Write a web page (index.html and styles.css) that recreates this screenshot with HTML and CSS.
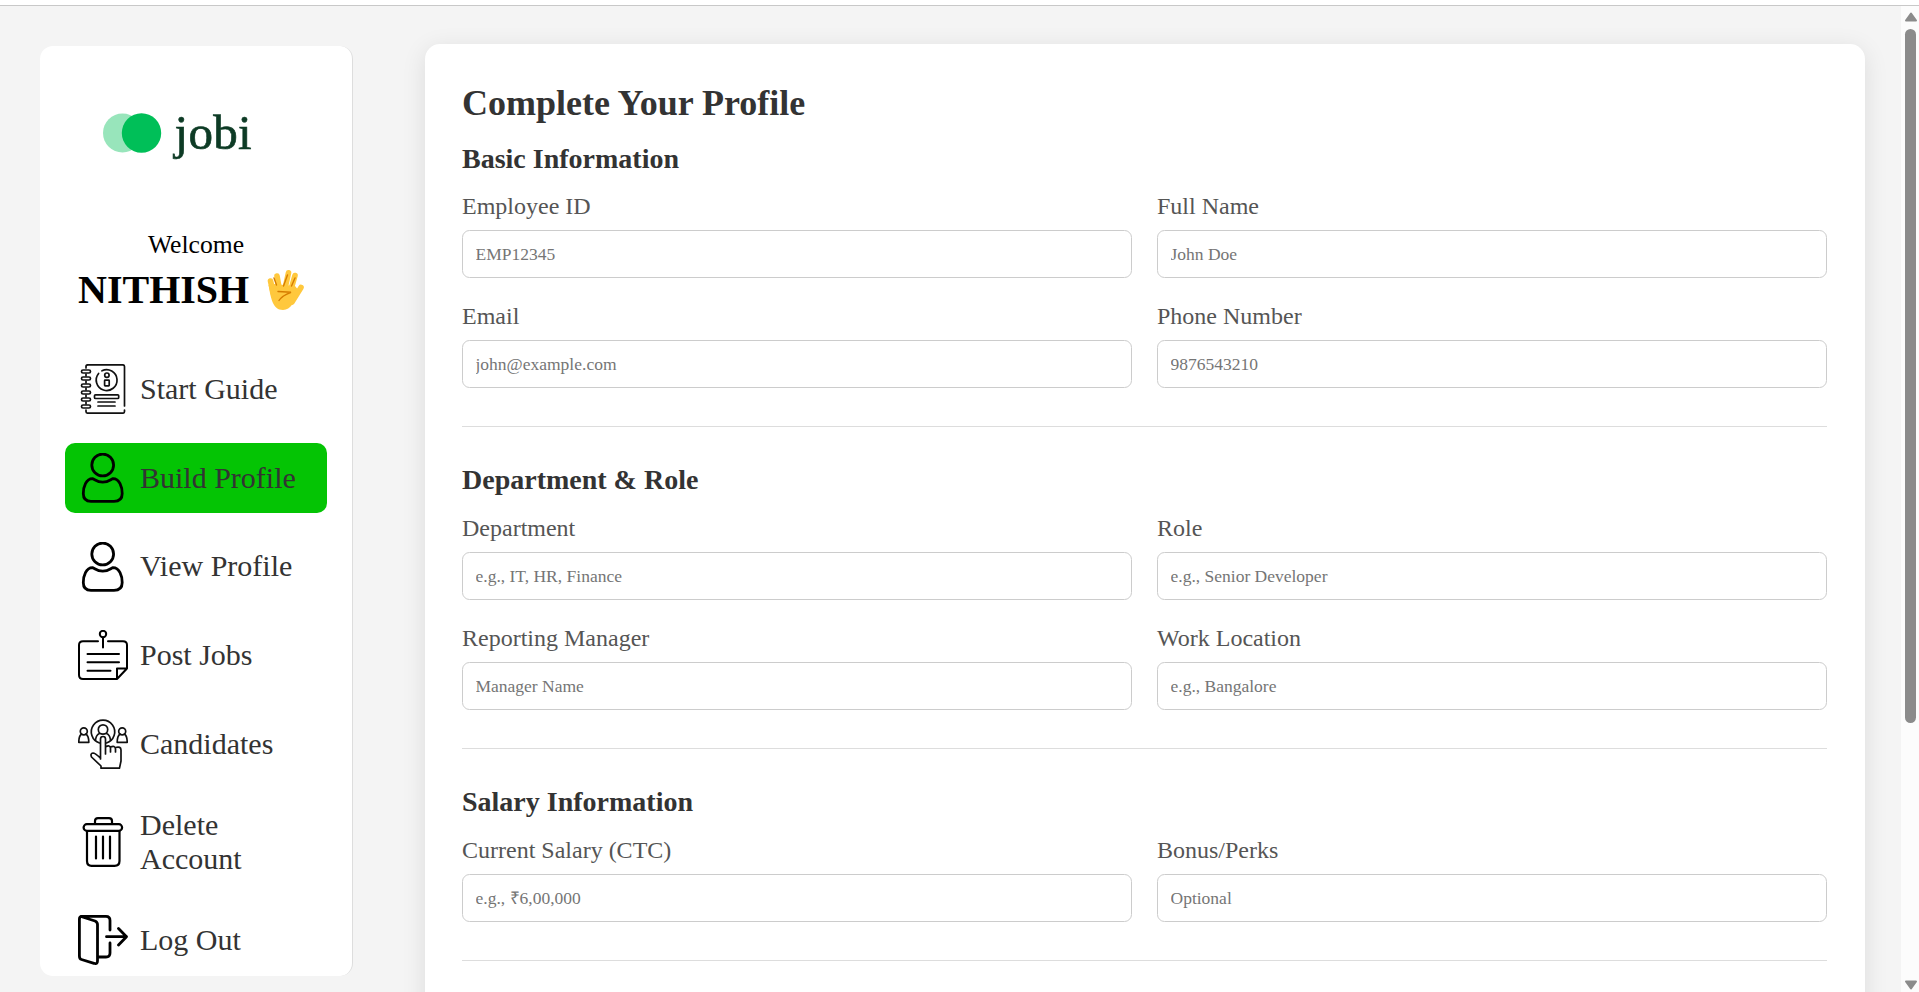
FILE: index.html
```html
<!DOCTYPE html>
<html lang="en">
<head>
<meta charset="utf-8">
<title>Complete Your Profile</title>
<link rel="stylesheet" href="styles.css">
</head>
<body>
<svg class="defs" aria-hidden="true">
  <symbol id="user" viewBox="0 0 50 50">
    <g fill="none" stroke="#000" stroke-width="2.8" stroke-linejoin="round"><circle cx="24.7" cy="12" r="10.9"/><path d="M14.5 25.6C8 25.6 5.3 34 5.3 40.5C5.300 46 8 48.400 13 48.400H36C41.500 48.400 44.200 46 44.200 40.500C44.200 34 41.500 25.600 35 25.600C32.500 26.500 30.500 29.200 24.700 29.200C19 29.200 17 26.500 14.500 25.600Z"/></g>
  </symbol>
</svg>
<div class="page">
  <aside class="sidebar">
    <svg class="logo" width="156" height="80" viewBox="0 0 156 80">
      <circle cx="22.500" cy="40" r="19.500" fill="#98e5bb"/><circle cx="41.500" cy="40" r="19.700" fill="#00bf58"/>
      <text class="logo-text" x="74.500" y="55.500" textLength="77">jobi</text>
    </svg>
    <p class="welcome">Welcome</p>
    <h1 class="name"><span>NITHISH</span>
      <svg width="38" height="42" viewBox="0 0 38 42"><g fill="none" stroke="#ffc83d" stroke-linecap="round"><path stroke-width="5.600" d="M3.500 12L7 27M10 7L13 24M21.500 3.800L17 24M28 6.500L23 24M34 18.500L25 33"/></g><path fill="#ffc83d" d="M1.500 16L7 15L28 17L33 23C27 32 24 41 16 41C6 41 4 30 1.500 16Z"/><path d="M7 9L9.500 16M20.500 6L16.500 17M28 9L24.500 17M11 22.500L24 23.300C18 25.500 14.500 27.500 12 31.500" fill="none" stroke="#d67d00" stroke-width="1.400" stroke-linecap="round"/></svg>
    </h1>
    <nav class="menu">
      <a class="item"><svg viewBox="0 0 50 50"><g fill="none" stroke="#111" stroke-width="1.700" stroke-linecap="round" stroke-linejoin="round"><path d="M8 4V2.500Q8 .8 10 .8H44.500Q46.500 .8 46.500 2.500V42M46.500 46V47.500Q46.500 49.200 44.500 49.200H10Q8 49.200 8 47.500V46M8 10V12M8 17V19M8 24V26M8 31V33M8 38V40"/><path d="M20.600 9.500A10.400 10.400 0 1 0 24 6.800"/><circle cx="28.900" cy="11.200" r="2.200"/><rect x="26.600" y="16.200" width="4.600" height="5.600" rx=".5"/><rect x="16.500" y="30.800" width="24.200" height="3.700" rx="1"/><path d="M20 38H37M20 42H37"/><rect x="3.500" y="6" width="9" height="3" rx="1.500"/><rect x="3.500" y="13" width="9" height="3" rx="1.500"/><rect x="3.500" y="20" width="9" height="3" rx="1.500"/><rect x="3.500" y="27" width="9" height="3" rx="1.500"/><rect x="3.500" y="34" width="9" height="3" rx="1.500"/><rect x="3.500" y="41" width="9" height="3" rx="1.500"/></g></svg><span>Start Guide</span></a>
      <a class="item active"><svg viewBox="0 0 50 50"><use href="#user"/></svg><span>Build Profile</span></a>
      <a class="item"><svg viewBox="0 0 50 50"><use href="#user"/></svg><span>View Profile</span></a>
      <a class="item"><svg viewBox="0 0 50 50"><g fill="none" stroke="#000" stroke-width="2" stroke-linecap="round" stroke-linejoin="round"><circle cx="25" cy="4" r="3.200"/><path d="M25 7.500V17.500M20 11.300H5Q1 11.300 1 15V45Q1 49 5 49H39L49 38.500V15Q49 11.300 45 11.300H30M39 49V38.500H49M9.500 24H41M9.500 32.300H41M9.500 40.700H32.500"/></g></svg><span>Post Jobs</span></a>
      <a class="item"><svg viewBox="0 0 50 50"><g fill="none" stroke="#111" stroke-width="1.700" stroke-linecap="round" stroke-linejoin="round"><path d="M21.500 24A11.700 11.700 0 1 1 28.500 24"/><circle cx="25" cy="10.500" r="4.700"/><path d="M17.500 21Q18 16 21.500 14.500M32.500 21Q32 16 28.500 14.500"/><circle cx="5.800" cy="12.300" r="3.500"/><path d="M3.500 15Q.8 17 .8 23.300H10.800Q10.800 17 8 15"/><circle cx="44.200" cy="12.300" r="3.500"/><path d="M42 15Q39.200 17 39.200 23.300H49.200Q49.200 17 46.500 15"/><path d="M22.500 40V20Q22.500 17.500 25 17.500T27.500 20V35M27.500 28Q32 25.500 32.500 29V33M32.500 28Q37 26 37.500 30V33M37.500 28.500Q43 27 43 31V42L41.500 49.200H23V47L13.500 38Q12 34.500 15 34Q17 34 22.500 39"/></g></svg><span>Candidates</span></a>
      <a class="item two-line"><svg viewBox="0 0 50 50"><g fill="none" stroke="#000" stroke-width="2.200" stroke-linecap="round" stroke-linejoin="round"><rect x="5.600" y="7.200" width="38.500" height="6.600" rx="3.300"/><path d="M17 7V4Q17 1.200 20 1.200H31Q34 1.200 34 4V7M9 14V44Q9 48.800 13.500 48.800H36.500Q41.500 48.800 41.500 44V14M18 19.500V41.500M25 19.500V41.500M32 19.500V41.500"/></g></svg><span>Delete Account</span></a>
      <a class="item"><svg viewBox="0 0 50 50"><g fill="none" stroke="#000" stroke-width="2.800" stroke-linecap="round" stroke-linejoin="round"><path d="M3 1.500L17 6Q19.500 7 19.500 9.500V46Q19.500 49.500 16 48.300L3.500 44.500Q1.400 44 1.400 41V4Q1.400 1.400 4 1.400H28Q32 1.400 32 5.500V15M32 28V38Q32 42 28 42H20M28.500 21.700H48.500M40.500 13.500L48.500 21.700L40.500 30"/></g></svg><span>Log Out</span></a>
    </nav>
  </aside>
  <main class="card">
    <h2>Complete Your Profile</h2>
    <section>
      <h3>Basic Information</h3>
      <div class="grid">
        <label>Employee ID<input placeholder="EMP12345"></label>
        <label>Full Name<input placeholder="John Doe"></label>
        <label>Email<input placeholder="john@example.com"></label>
        <label>Phone Number<input placeholder="9876543210"></label>
      </div>
    </section>
    <section>
      <h3>Department &amp; Role</h3>
      <div class="grid">
        <label>Department<input placeholder="e.g., IT, HR, Finance"></label>
        <label>Role<input placeholder="e.g., Senior Developer"></label>
        <label>Reporting Manager<input placeholder="Manager Name"></label>
        <label>Work Location<input placeholder="e.g., Bangalore"></label>
      </div>
    </section>
    <section>
      <h3>Salary Information</h3>
      <div class="grid">
        <label>Current Salary (CTC)<input placeholder="e.g., ₹6,00,000"></label>
        <label>Bonus/Perks<input placeholder="Optional"></label>
      </div>
    </section>
  </main>
  <div class="scrollbar">
    <svg width="14" height="10" viewBox="0 0 14 10"><path d="M7 1.500L12 8.500H2Z"/></svg>
    <div class="thumb"></div>
    <svg class="down" width="14" height="10" viewBox="0 0 14 10"><path d="M7 8.500L12 1.500H2Z"/></svg>
  </div>
</div>
</body>
</html>
```
FILE: styles.css
```css
* { box-sizing: border-box; margin: 0; padding: 0; }
body { font-family: "Liberation Serif", "Times New Roman", serif; background: #fff; height: 992px; overflow: hidden; padding-top: 5px; }
.defs { display: none; }
.page { display: flex; align-items: flex-start; height: 987px; border-top: 1px solid #c8c8c8; background: #f4f4f4; overflow: hidden; }
.sidebar { width: 313px; height: 930px; margin: 40px 0 0 40px; padding: 47px 25px 0; background: #fff; border-right: 1px solid #ddd; border-radius: 13px; display: flex; flex-direction: column; flex: none; }
.logo { margin-left: 35px; flex: none; }
.logo-text { font-family: "Liberation Serif", serif; font-size: 49px; fill: #0d3b25; stroke: #0d3b25; stroke-width: .7px; }
.welcome { font-size: 25.6px; line-height: 29px; text-align: center; margin-top: 57px; }
.name { display: flex; align-items: center; gap: 18px; font-size: 40px; line-height: 46px; margin: 8px 0 0 13px; }
.name svg { flex: none; }
.menu { display: flex; flex-direction: column; gap: 18.75px; margin-top: 41px; }
.item { display: flex; align-items: center; gap: 12.5px; height: 70px; padding: 10px 12.5px; border-radius: 10px; font-size: 30px; line-height: 34.4px; color: #333; }
.item svg { width: 50px; height: 50px; flex: none; }
.item.active { background: #04c404; }
.item.two-line { height: 88.75px; }
.item.two-line span { width: 130px; }
.card { width: 1440px; height: 1400px; margin: 38px 0 0 72px; padding: 39px 38px 39px 37px; background: #fff; border-radius: 15px; box-shadow: 0 5px 25px rgba(0,0,0,.1); flex: none; }
h2 { font-size: 36px; line-height: 41px; color: #333; }
h3 { font-size: 28px; line-height: 32px; color: #333; margin-bottom: 19px; }
h2 + section h3 { margin-bottom: 18px; }
section { padding-bottom: 38px; border-bottom: 1px solid #ddd; margin-bottom: 37px; }
h2 + section { margin-top: 19px; }
.grid { display: grid; grid-template-columns: 1fr 1fr; gap: 25px; }
label { display: flex; flex-direction: column; gap: 10px; font-size: 24px; line-height: 27px; color: #555; }
input { height: 48px; width: 100%; border: 1px solid #ccc; border-radius: 7.5px; padding: 1px 12.5px 0; background: #fff; font-family: "Liberation Serif", serif; font-size: 17.5px; }
input::placeholder { color: #757575; }
.scrollbar { width: 18px; height: 986px; margin-left: auto; background: #fcfcfc; display: flex; flex-direction: column; align-items: center; padding: 6px 0 2px 1px; flex: none; }
.scrollbar path { fill: #8b8b8b; stroke: #8b8b8b; stroke-width: 2px; stroke-linejoin: round; }
.thumb { width: 11px; height: 694px; margin-top: 7px; border-radius: 6px; background: #8b8b8b; }
.down { margin-top: auto; }
```
